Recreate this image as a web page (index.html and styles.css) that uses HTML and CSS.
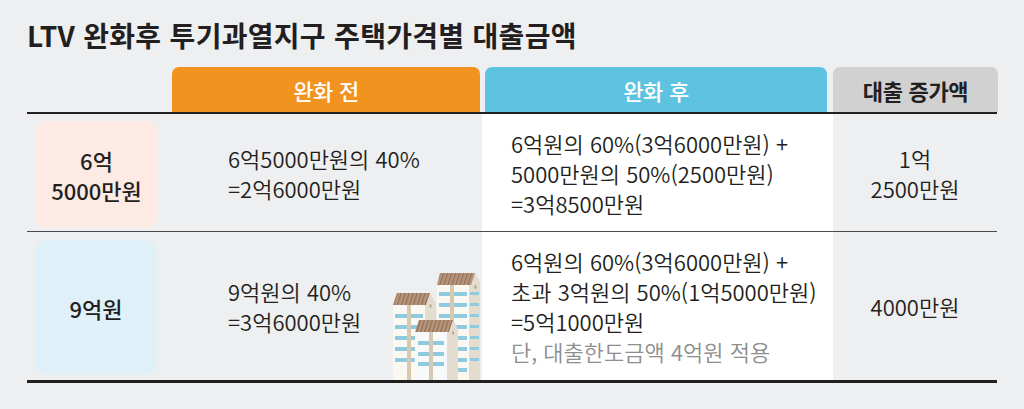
FILE: index.html
```html
<!DOCTYPE html>
<html lang="ko">
<head>
<meta charset="utf-8">
<title>LTV 완화후 투기과열지구 주택가격별 대출금액</title>
<link rel="stylesheet" href="styles.css">
</head>
<body>
<div class="page">
  <h1 class="title">LTV 완화후 투기과열지구 주택가격별 대출금액</h1>
  <div class="row head">
    <div class="cell"></div>
    <div class="tab tab-before">완화 전</div>
    <div class="tab tab-after">완화 후</div>
    <div class="tab tab-inc">대출 증가액</div>
  </div>
  <div class="row r1">
    <div class="cell c1"><div class="price pink">6억<br>5000만원</div></div>
    <div class="cell c2"><p>6억5000만원의 40%<br>=2억6000만원</p></div>
    <div class="cell c3"><p>6억원의 60%(3억6000만원) +<br>5000만원의 50%(2500만원)<br>=3억8500만원</p></div>
    <div class="cell c4"><p>1억<br>2500만원</p></div>
  </div>
  <div class="row r2">
    <div class="cell c1"><div class="price sky">9억원</div></div>
    <div class="cell c2">
      <p>9억원의 40%<br>=3억6000만원</p>
      <svg class="deco" width="88" height="110" viewBox="0 0 88 110" aria-hidden="true">
        <defs>
          <pattern id="tiles" width="4" height="12" patternUnits="userSpaceOnUse" patternTransform="skewX(-18)">
            <rect width="4" height="12" fill="#b8967c"/>
            <rect width="1.3" height="12" fill="#8f6f58"/>
          </pattern>
        </defs>
        <!-- back tall building -->
        <polygon points="77,15 83,3 88,12 88,110 77,110" fill="#e4dccf"/>
        <ellipse cx="83.5" cy="17" rx="1.3" ry="2" fill="#b7aa95"/>
        <rect x="45" y="15" width="32" height="95" fill="#fbf8f1"/>
        <g fill="#8fcbe0">
          <rect x="47" y="22" width="28" height="4"/>
          <rect x="47" y="33" width="28" height="4"/>
          <rect x="47" y="44" width="28" height="4"/>
          <rect x="47" y="55" width="28" height="4"/>
          <rect x="47" y="66" width="28" height="4"/>
          <rect x="47" y="77" width="28" height="4"/>
          <rect x="47" y="88" width="28" height="4"/>
          <rect x="47" y="98" width="28" height="4"/>
        </g>
        <g fill="#8fcbe0">
          <rect x="78" y="22" width="9" height="3"/>
          <rect x="78" y="33" width="9" height="3"/>
          <rect x="78" y="44" width="9" height="3"/>
          <rect x="78" y="55" width="9" height="3"/>
          <rect x="78" y="66" width="9" height="3"/>
          <rect x="78" y="77" width="9" height="3"/>
          <rect x="78" y="88" width="9" height="3"/>
        </g>
        <rect x="58" y="15" width="4" height="95" fill="#d8c8af"/>
        <polygon points="48,3 83,3 79,15 45,15" fill="url(#tiles)"/>
        <!-- left building -->
        <polygon points="33,35 38,23 44,33 44,110 33,110" fill="#e4dccf"/>
        <ellipse cx="38.5" cy="36" rx="1.2" ry="1.8" fill="#b7aa95"/>
        <rect x="1" y="35" width="32" height="75" fill="#fbf8f1"/>
        <g fill="#8fcbe0">
          <rect x="3" y="44" width="28" height="4"/>
          <rect x="3" y="55" width="28" height="4"/>
          <rect x="3" y="66" width="28" height="4"/>
          <rect x="3" y="77" width="28" height="4"/>
          <rect x="3" y="88" width="28" height="4"/>
        </g>
        <rect x="15" y="35" width="4" height="75" fill="#d8c8af"/>
        <polygon points="5,23 38,23 34,35 1,35" fill="url(#tiles)"/>
        <!-- front building -->
        <polygon points="55,62 61,50 66,59 66,110 55,110" fill="#e4dccf"/>
        <ellipse cx="61" cy="63" rx="1.2" ry="1.8" fill="#b7aa95"/>
        <rect x="23" y="62" width="32" height="48" fill="#f8f9fb"/>
        <g fill="#8fcbe0">
          <rect x="26" y="71" width="26" height="4"/>
          <rect x="26" y="82" width="26" height="4"/>
          <rect x="26" y="92" width="26" height="4"/>
        </g>
        <rect x="37" y="62" width="4" height="48" fill="#d8c8af"/>
        <polygon points="27,50 61,50 57,62 23,62" fill="url(#tiles)"/>
      </svg>
    </div>
    <div class="cell c3"><p>6억원의 60%(3억6000만원) +<br>초과 3억원의 50%(1억5000만원)<br>=5억1000만원<br><span class="note">단, 대출한도금액 4억원 적용</span></p></div>
    <div class="cell c4"><p>4000만원</p></div>
  </div>
</div>
</body>
</html>
```

FILE: styles.css
```css
* {
  box-sizing: border-box;
}

body {
  margin: 0;
  background: #eeeff0;
  font-family: "Noto Sans CJK KR", "Noto Sans", sans-serif;
  color: #231f20;
}

.page {
  width: 1024px;
  padding: 18px 27px 0 27px;
}

.title {
  margin: 0;
  font-size: 28px;
  line-height: 34px;
  font-weight: 700;
  letter-spacing: 0.3px;
}

.row {
  display: grid;
  grid-template-columns: 145px 310px 351px 164px;
}

.head {
  margin-top: 15px;
  height: 47px;
  border-bottom: 2px solid #231f20;
}

.tab {
  display: flex;
  align-items: center;
  justify-content: center;
  border-radius: 7px 7px 0 0;
  font-size: 22px;
  font-weight: 500;
  letter-spacing: -0.3px;
}

.tab-before {
  background: #f2921f;
  color: #ffffff;
  margin-right: 2px;
}

.tab-after {
  background: #5ec3e1;
  color: #ffffff;
  margin: 0 6px 0 3px;
}

.tab-inc {
  background: #d1d1d2;
  margin-right: -1px;
  font-weight: 700;
}

.r1 {
  height: 118px;
  border-bottom: 1px solid #4a4a4a;
}

.r2 {
  height: 151px;
  border-bottom: 3px solid #231f20;
}

.cell {
  display: flex;
  align-items: center;
  font-size: 22px;
  line-height: 30px;
  font-weight: 350;
  letter-spacing: 0;
}

.cell p {
  margin: 0;
}

.c1 {
  align-items: stretch;
  padding: 7px 14px 3px 8px;
}

.r2 .c1 {
  padding: 8px 15px 5px 8px;
}

.price {
  flex: 1;
  display: flex;
  align-items: center;
  justify-content: center;
  text-align: center;
  border-radius: 12px;
  font-weight: 500;
}

.pink {
  background: #fdeae5;
}

.sky {
  background: #dff0f8;
}

.c2 {
  position: relative;
  padding-left: 56px;
}

.c3 {
  padding-left: 29px;
  background: #ffffff;
}

.c4 {
  justify-content: center;
  text-align: center;
}

.note {
  color: #8e8e8e;
}

.deco {
  position: absolute;
  right: 2px;
  bottom: 0;
}
```
